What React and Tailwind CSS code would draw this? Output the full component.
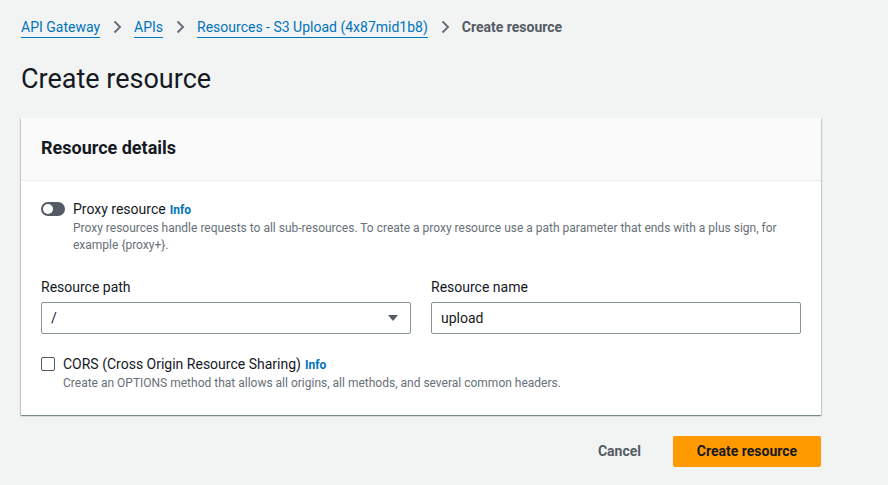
const Chevron = () => (
  <svg width="16" height="16" viewBox="0 0 16 16" className="mx-[9px] shrink-0">
    <path d="M5.5 2.5 11 8l-5.5 5.5" fill="none" stroke="#687078" strokeWidth="2" />
  </svg>
);

const Crumb = ({ children }) => (
  <a href="#" className="text-[#0073bb] underline decoration-1 underline-offset-[5px]">
    {children}
  </a>
);

const Info = () => <span className="ml-1 text-[12px] font-bold text-[#0073bb]">Info</span>;

export default function App() {
  return (
    <div className="min-h-[485px] bg-[#f2f3f3] px-[21px] pt-[16px] font-['Roboto',sans-serif] text-[#16191f]">
      <nav className="flex h-[22px] items-center text-[14px]">
        <Crumb>API Gateway</Crumb>
        <Chevron />
        <Crumb>APIs</Crumb>
        <Chevron />
        <Crumb>Resources - S3 Upload (4x87mid1b8)</Crumb>
        <Chevron />
        <span className="font-bold text-[#545b64]">Create resource</span>
      </nav>

      <h1 className="mt-[25px] text-[27px] leading-[32px]">Create resource</h1>

      <div className="mt-[23px] w-[800px] bg-white shadow-[0_1px_1px_0_rgba(0,28,36,0.3),1px_1px_1px_0_rgba(0,28,36,0.15),-1px_1px_1px_0_rgba(0,28,36,0.15)]">
        <div className="flex h-[63px] items-center border-b border-[#eaeded] bg-[#fafafa] px-[20px] pb-[3px]">
          <h2 className="text-[18px] font-bold">Resource details</h2>
        </div>

        <div className="px-[20px] pb-[23px] pt-[18px]">
          <div className="flex items-start gap-[8px]">
            <div className="mt-[3px] flex h-[14px] w-[24px] shrink-0 items-center rounded-full bg-[#545b64] px-[2px]">
              <div className="h-[10px] w-[10px] rounded-full bg-white" />
            </div>
            <div>
              <div className="text-[14px] leading-[20px]">
                Proxy resource
                <Info />
              </div>
              <p className="text-[12px] leading-[17px] text-[#687078]">
                Proxy resources handle requests to all sub-resources. To create a proxy resource use a path parameter that ends with a plus sign, for example {"{proxy+}"}.
              </p>
            </div>
          </div>

          <div className="mt-[23px] grid grid-cols-2 gap-[20px]">
            <div>
              <label className="block text-[14px] leading-[20px]">Resource path</label>
              <div className="mt-[5px] flex h-[32px] items-center justify-between rounded-[2px] border border-[#879596] px-[9px] text-[14px]">
                <span>/</span>
                <svg width="16" height="16" viewBox="0 0 16 16">
                  <path d="M3 5h10l-5 6z" fill="#545b64" />
                </svg>
              </div>
            </div>
            <div>
              <label className="block text-[14px] leading-[20px]">Resource name</label>
              <div className="mt-[5px] flex h-[32px] items-center rounded-[2px] border border-[#879596] px-[9px] text-[14px]">
                upload
              </div>
            </div>
          </div>

          <div className="mt-[20px] flex items-start gap-[8px]">
            <div className="mt-[3px] h-[14px] w-[14px] shrink-0 rounded-[2px] border border-[#545b64] bg-white" />
            <div>
              <div className="text-[14px] leading-[20px]">
                CORS (Cross Origin Resource Sharing)
                <Info />
              </div>
              <p className="text-[12px] leading-[17px] text-[#687078]">
                Create an OPTIONS method that allows all origins, all methods, and several common headers.
              </p>
            </div>
          </div>
        </div>
      </div>

      <div className="mt-[20px] flex w-[800px] items-center justify-end gap-[12px]">
        <button className="px-[20px] py-[6px] text-[14px] font-bold text-[#545b64]">Cancel</button>
        <button className="h-[31px] w-[148px] rounded-[2px] bg-[#ff9900] text-[14px] font-bold text-[#16191f]">
          Create resource
        </button>
      </div>
    </div>
  );
}
